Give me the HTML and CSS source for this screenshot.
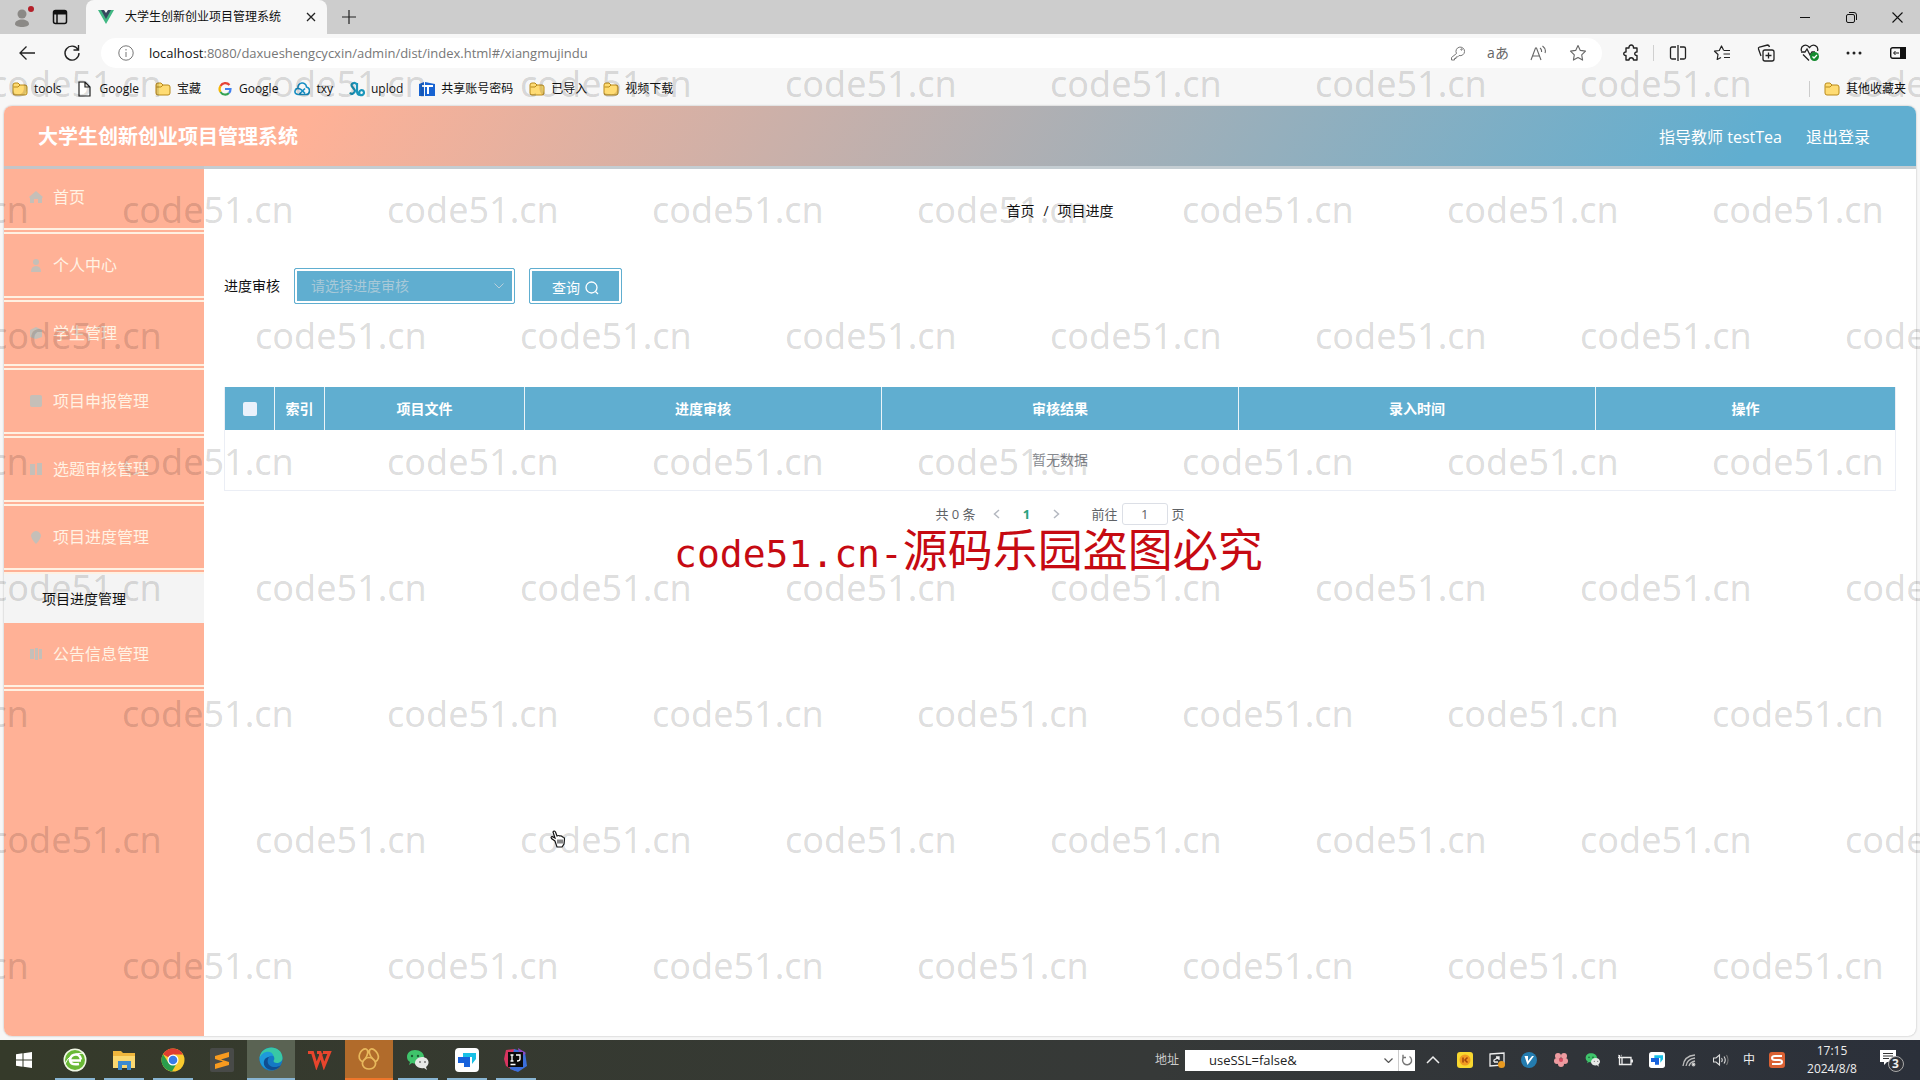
FILE: index.html
```html
<!DOCTYPE html>
<html lang="zh-CN">
<head>
<meta charset="utf-8">
<title>大学生创新创业项目管理系统</title>
<link rel="stylesheet" href="styles.css">
</head>
<body>
<svg class="defs" aria-hidden="true">
  <symbol id="folder" viewBox="0 0 16 16"><path d="M1 4q0-2 2-2h3l2 2h5q2 0 2 2v6q0 2-2 2H3q-2 0-2-2z" fill="#ffdc74" stroke="#b98a1b"/><path d="M1.500 6h4.500l2-2" fill="none" stroke="#b98a1b"/></symbol>
  <symbol id="wechat" viewBox="0 0 24 24"><path d="M9 2C4 2 1 5 1 9c0 2 1 4 3 5l-1 3 3-2c6 2 12-1 12-6 0-4-4-7-9-7z" fill="#3fc46b"/><circle cx="6" cy="8" r="1.200" fill="#1c5e35"/><circle cx="12" cy="8" r="1.200" fill="#1c5e35"/><path d="M16 9c-4 0-7 3-7 6s4 6 9 5l3 2-1-3c5-4 2-10-4-10z" fill="#e6e8e6"/><circle cx="14" cy="14" r="1" fill="#777"/><circle cx="19" cy="14" r="1" fill="#777"/></symbol>
  <symbol id="todesk" viewBox="0 0 24 24"><rect width="24" height="24" rx="4" fill="#fff"/><path d="M8 5h13v6l-4 5V9H8z" fill="#18c0e6"/><path d="M3 9h12v10H9v-4H3z" fill="#1762dc"/></symbol>
</svg>

<header class="browser">
  <div class="tabs">
    <button class="tool profile" aria-label="用户"><svg width="22" height="24" viewBox="0 0 22 24"><circle cx="9" cy="9" r="4.500" fill="#8b8986"/><path d="M2 19c0-6 14-6 14 0 0 4-14 4-14 0z" fill="#8b8986"/><circle cx="18" cy="4" r="3" fill="#b4202a"/></svg></button>
    <button class="tool spaces" aria-label="标签页"><svg width="16" height="16" viewBox="0 0 16 16" fill="none" stroke="#111" stroke-width="1.500"><rect x="1.500" y="1.500" width="13" height="13" rx="2"/><path d="M2 3.500h12" stroke-width="4"/><path d="M5 4v10"/></svg></button>
    <div class="tab">
      <svg width="16" height="14" viewBox="0 0 16 14"><path d="M0 0h4l4 7 4-7h4L8 14z" fill="#41b883"/><path d="M3 0h3l2 3 2-3h3L8 9z" fill="#35495e"/></svg>
      <span class="tab-title">大学生创新创业项目管理系统</span>
      <button class="plain" aria-label="关闭标签"><svg width="10" height="10" viewBox="0 0 10 10" stroke="#222" stroke-width="1.300"><path d="M1 1l8 8M9 1L1 9"/></svg></button>
    </div>
    <button class="plain" aria-label="新标签"><svg width="16" height="16" viewBox="0 0 16 16" stroke="#222" stroke-width="1.200"><path d="M8 1v14M1 8h14"/></svg></button>
    <div class="window-buttons">
      <button class="plain" aria-label="最小化"><svg width="10" height="10" viewBox="0 0 10 10" stroke="#111"><path d="M0 5.500h10"/></svg></button>
      <button class="plain" aria-label="还原"><svg width="11" height="11" viewBox="0 0 11 11" fill="none" stroke="#111"><rect x=".5" y="2.500" width="8" height="8" rx="1.500"/><path d="M3 .5h5q2.500 0 2.500 2.500v5"/></svg></button>
      <button class="plain" aria-label="关闭"><svg width="11" height="11" viewBox="0 0 11 11" stroke="#111" stroke-width="1.100"><path d="M.5.5l10 10M10.500.5l-10 10"/></svg></button>
    </div>
  </div>

  <div class="navbar">
    <button class="plain" aria-label="后退"><svg width="18" height="16" viewBox="0 0 18 16" fill="none" stroke="#222" stroke-width="1.300"><path d="M17 8H2M8.500 1.500L2 8l6.500 6.500"/></svg></button>
    <button class="plain" aria-label="刷新"><svg width="18" height="18" viewBox="0 0 18 18" fill="none" stroke="#222" stroke-width="1.400"><path d="M15 5.500A7 7 0 1 0 16 9M15.500 1v5h-5"/></svg></button>
    <div class="address">
      <svg width="16" height="16" viewBox="0 0 16 16" fill="none" stroke="#777"><circle cx="8" cy="8" r="7.200"/><path d="M8 7v5M8 4v1.500"/></svg>
      <span class="url"><b>localhost</b>:8080/daxueshengcycxin/admin/dist/index.html#/xiangmujindu</span>
      <div class="address-tools">
        <button class="plain" aria-label="密码"><svg width="16" height="16" viewBox="0 0 16 16" fill="none" stroke="#777"><path d="M6.500 8.500A4.300 4.300 0 1 1 9 10.500L7.500 12H6v1.500H4.500V15H1.500v-2.500z"/><circle cx="11.500" cy="4.500" r=".7"/></svg></button>
        <button class="plain translate" aria-label="翻译">aあ</button>
        <button class="plain" aria-label="朗读"><svg width="17" height="16" viewBox="0 0 17 16" fill="none" stroke="#666" stroke-width="1.100"><path d="M1 15L5.500 3h1L11 15M3 11h6.500M10 3q2 1.500 1.500 4M12.500 1q4 3 2.500 7"/></svg></button>
        <button class="plain" aria-label="收藏"><svg width="18" height="18" viewBox="0 0 18 18" fill="none" stroke="#666" stroke-width="1.100" stroke-linejoin="round"><path d="M9 1.500l2.300 4.900 5.200.7-3.800 3.700.9 5.300L9 13.500l-4.600 2.600.9-5.300L1.500 7.100l5.200-.7z"/></svg></button>
      </div>
    </div>
    <div class="nav-tools">
      <button class="plain puzzle" aria-label="扩展"><svg width="17" height="18" viewBox="0 0 17 18" fill="none" stroke="#222" stroke-width="1.400" stroke-linejoin="round"><path d="M3 4h3c-.5-4 5-4 4.500 0H14v4c-3-.5-3 4 0 3.500V16h-3.500c0-3-4.500-3-4.500 0H3v-4.500c-3 .5-3-4 0-3.500z"/></svg></button>
      <button class="plain" aria-label="分屏"><svg width="18" height="18" viewBox="0 0 18 18" fill="none" stroke="#222" stroke-width="1.300"><path d="M7 3H3q-1.500 0-1.500 1.500v9Q1.500 15 3 15h4M11 3h4q1.500 0 1.500 1.500v9Q16.500 15 15 15h-4M9 1v16"/></svg></button>
      <button class="plain" aria-label="收藏夹"><svg width="18" height="18" viewBox="0 0 18 18" fill="none" stroke="#222" stroke-width="1.200" stroke-linejoin="round"><path d="M10.500 6L8.500 2 6.300 6.500 1.500 7.200 5 10.500l-.8 5L8 13.500M10.500 6.500H17M10.500 10H17M11 13.500h6"/></svg></button>
      <button class="plain" aria-label="集锦"><svg width="18" height="18" viewBox="0 0 18 18" fill="none" stroke="#222" stroke-width="1.300"><rect x="6" y="6" width="11" height="11" rx="2"/><path d="M11.500 8.500v6M8.500 11.500h6M4 12L1.500 5q-.5-1.500 1-2l8-2q1.500 0 2 2"/></svg></button>
      <button class="plain" aria-label="性能"><svg width="20" height="18" viewBox="0 0 20 18" fill="none" stroke="#222" stroke-width="1.300"><path d="M1.500 7C0 2 6-1 9.500 3.500 13-1 19 2 17.500 7M1 8h4l2-3 3 6 2-3h3M3 10.500l6 6"/><circle cx="14.500" cy="12.500" r="4.500" fill="#138a2e" stroke="none"/><path d="M12.500 12.500l1.500 1.500 3-3" stroke="#fff"/></svg></button>
      <button class="plain" aria-label="更多"><svg width="16" height="4" viewBox="0 0 16 4" fill="#222"><circle cx="2" cy="2" r="1.500"/><circle cx="8" cy="2" r="1.500"/><circle cx="14" cy="2" r="1.500"/></svg></button>
      <button class="plain" aria-label="侧栏"><svg width="16" height="12" viewBox="0 0 16 12"><rect x=".7" y=".7" width="14.600" height="10.600" rx="2" fill="none" stroke="#111" stroke-width="1.400"/><path d="M10 0h6v12h-6z" fill="#111"/><path d="M9 6H4M5.500 4L3.500 6l2 2" fill="none" stroke="#111"/></svg></button>
    </div>
  </div>

  <nav class="bookmarks">
    <a href="#"><svg width="16" height="16"><use href="#folder"/></svg>tools</a>
    <a href="#"><svg width="16" height="16" viewBox="0 0 16 16" fill="#fff" stroke="#222" stroke-width="1.200"><path d="M2 1h6l5 5v9H2zM8 1v5h5"/></svg>Google</a>
    <a href="#"><svg width="16" height="16"><use href="#folder"/></svg>宝藏</a>
    <a href="#"><svg width="16" height="16" viewBox="0 0 16 16" fill="none" stroke-width="2.200"><path d="M12.500 4A5.500 5.500 0 0 0 3.500 5" stroke="#e54335"/><path d="M3.500 5a5.500 5.500 0 0 0 0 6" stroke="#f6b704"/><path d="M3.500 11a5.500 5.500 0 0 0 8.500 1" stroke="#34a353"/><path d="M8 8h5.500q0 2.500-1.500 4" stroke="#4280ef"/></svg>Google</a>
    <a href="#"><svg width="16" height="16" viewBox="0 0 16 16" fill="none" stroke="#168ec4" stroke-width="1.600"><path d="M4 13.500C-1 13 1 7 4 7.500 3 1 12 0 12.500 6 17 7 16 13.500 12 13.500H5l6-6M4 7.500q3 0 7 5"/></svg>txy</a>
    <a href="#"><svg width="16" height="16" viewBox="0 0 16 16" fill="none" stroke="#1b96ba" stroke-width="2.200"><path d="M8 4C6 0 1 3 3 5.500S8 10 4 12.500q-2 1-3-1M8 2v8q0 4 3 4M11 14c-3-5 4-7 4-2q-1 3-4 2"/></svg>uplod</a>
    <a href="#"><svg width="16" height="16" viewBox="0 0 16 16"><path d="M0 3l5-2v14H0zM6 1l10 2v12H6z" fill="#1763d2"/><path d="M3 5h11M9 5v8" stroke="#fff" stroke-width="2"/></svg>共享账号密码</a>
    <a href="#"><svg width="16" height="16"><use href="#folder"/></svg>已导入</a>
    <a href="#"><svg width="16" height="16"><use href="#folder"/></svg>视频下载</a>
    <a href="#" class="other"><svg width="16" height="16"><use href="#folder"/></svg>其他收藏夹</a>
  </nav>
</header>

<div class="page">
  <div class="app">
    <header class="app-header">
      <h1>大学生创新创业项目管理系统</h1>
      <span>指导教师 testTea</span>
      <a href="#">退出登录</a>
    </header>
    <div class="app-body">
      <nav class="sidebar">
        <a href="#" class="item"><svg width="14" height="14" viewBox="0 0 14 14"><path d="M7 1l7 6-1 1v5H9V9H5v4H1V8L0 7z"/></svg>首页</a>
        <a href="#" class="item"><svg width="14" height="14" viewBox="0 0 14 14"><circle cx="7" cy="4" r="3"/><path d="M2 14q0-6 5-6t5 6z"/></svg>个人中心</a>
        <a href="#" class="item"><svg width="14" height="14" viewBox="0 0 14 14"><path d="M1 4l6-3 6 3v7l-6 2-6-2z"/></svg>学生管理</a>
        <a href="#" class="item"><svg width="14" height="14" viewBox="0 0 14 14"><rect x="1" y="1" width="12" height="12" rx="2"/></svg>项目申报管理</a>
        <a href="#" class="item"><svg width="14" height="14" viewBox="0 0 14 14"><path d="M1 2h5v11H1zM8 1h5v12H8z"/></svg>选题审核管理</a>
        <a href="#" class="item"><svg width="14" height="14" viewBox="0 0 14 14"><path d="M7 1q3 0 5 4 0 4-5 9-5-5-5-9 2-4 5-4z"/></svg>项目进度管理</a>
        <a href="#" class="subitem">项目进度管理</a>
        <a href="#" class="item"><svg width="14" height="14" viewBox="0 0 14 14"><path d="M1 2h4v10H1zM6 1h3v12H6zM10 2h3v10h-3z"/></svg>公告信息管理</a>
      </nav>

      <main class="content">
        <div class="breadcrumb"><a href="#">首页</a><span>/</span><span>项目进度</span></div>
        <form class="filters">
          <label for="state">进度审核</label>
          <div class="select-box">
            <select id="state"><option>请选择进度审核</option></select>
            <svg class="caret" width="10" height="6" viewBox="0 0 10 6" fill="none" stroke="#b9cfdb"><path d="M.5.5L5 5 9.500.5"/></svg>
          </div>
          <button type="button" class="query">查询<svg width="14" height="14" viewBox="0 0 14 14" fill="none" stroke="#fff" stroke-width="1.300"><circle cx="6.500" cy="6.500" r="5.500"/><path d="M10.500 10.500L13 13"/></svg></button>
        </form>

        <table>
          <colgroup><col class="narrow"><col class="narrow"><col class="file"><col><col><col><col class="ops"></colgroup>
          <thead><tr><th><input type="checkbox" aria-label="全选"></th><th>索引</th><th>项目文件</th><th>进度审核</th><th>审核结果</th><th>录入时间</th><th>操作</th></tr></thead>
          <tbody><tr><td colspan="7">暂无数据</td></tr></tbody>
        </table>

        <div class="pagination">
          <span>共 0 条</span>
          <button class="plain" aria-label="上一页"><svg width="7" height="10" viewBox="0 0 7 10" fill="none" stroke="#b4b8c0" stroke-width="1.500"><path d="M6 1L1.500 5 6 9"/></svg></button>
          <button class="plain current">1</button>
          <button class="plain" aria-label="下一页"><svg width="7" height="10" viewBox="0 0 7 10" fill="none" stroke="#b4b8c0" stroke-width="1.500"><path d="M1 1l4.500 4L1 9"/></svg></button>
          <label class="jump">前往<input type="text" value="1">页</label>
        </div>
      </main>
    </div>
  </div>
</div>

<footer class="taskbar">
  <button class="start" aria-label="开始"><svg width="16" height="16" viewBox="0 0 16 16" fill="#fff"><path d="M0 2.200l6.500-.9v6.200H0zM7.500 1.200L16 0v7.500H7.500zM0 8.500h6.500v6.200L0 13.800zM7.500 8.500H16V16l-8.500-1.200z"/></svg></button>
  <div class="apps">
    <button class="running" aria-label="浏览器"><svg width="24" height="24" viewBox="0 0 24 24"><circle cx="12" cy="12" r="11.500" fill="#f1f8e6"/><circle cx="12" cy="12" r="10" fill="#69b936"/><path d="M18 12.500H7q1 5 9 3.500M7 11.500q1-5 6-5 4 0 5 5" fill="none" stroke="#fff" stroke-width="2.500"/><path d="M2 16Q6 5 21 5" stroke="#fff" fill="none"/></svg></button>
    <button class="running" aria-label="文件"><svg width="22" height="20" viewBox="0 0 22 20"><path d="M0 1h8l2 2h12v14H0z" fill="#efb63d"/><path d="M0 6h22v12H0z" fill="#fbd870"/><path d="M5 11h13v9h-4v-5H9v5H5z" fill="#3c8bd0"/></svg></button>
    <button class="running" aria-label="Chrome"><svg width="24" height="24" viewBox="0 0 24 24"><circle cx="12" cy="12" r="11.500" fill="#f8ca2e"/><path d="M12 12L2 6.300A11.500 11.500 0 0 1 22 6.500H12z" fill="#df3d31"/><path d="M2 6.300a11.500 11.500 0 0 0 9 17.200L16.500 14 12 17l-5-3z" fill="#2a9d4c"/><circle cx="12" cy="12" r="5.500" fill="#fff"/><circle cx="12" cy="12" r="4.300" fill="#3a7ce8"/></svg></button>
    <button aria-label="Sublime"><svg width="24" height="24" viewBox="0 0 24 24"><rect width="24" height="24" rx="2" fill="#484a48"/><path d="M19 4v5l-8 2.500 8 2.500v3L5 21v-5l8-2.500L5 11V8z" fill="#f79a1f"/></svg></button>
    <button class="active" aria-label="Edge"><svg width="26" height="24" viewBox="0 0 26 24"><circle cx="13" cy="12" r="11.500" fill="#1479c4"/><path d="M1.500 11C3-3 24-3 24.500 11c0 6-9 6-9 3 4-6-7-11-14-3z" fill="#38c8a5"/><path d="M1.500 11c3-8 13-8 14-2-7-2-9 7-4 13-6 0-10-5-10-11z" fill="#1e9adb"/><path d="M11 10c-5 8 5 13 12 8-5 8-19 6-17-4 1-3 3-4 5-4z" fill="#104d91"/></svg></button>
    <button aria-label="WPS"><svg width="26" height="20" viewBox="0 0 26 20" fill="none" stroke="#e8452d" stroke-width="3"><path d="M1 2.500h4.500l4 13.500 5-13M10 2.500h3l4 13.500 5.500-13.500H16"/></svg></button>
    <button class="alert" aria-label="编辑器"><svg width="24" height="24" viewBox="0 0 24 24" fill="none" stroke="#e8b85c" stroke-width="1.700"><path d="M8 12c-5 4-2 10 4 10s9-6 4-10c-2-2-6-2-8 0z"/><path d="M6 15C-2 12 4 1 9 2c3 1 2 6-1 10M18 15c8-4 0-14-4-13-3 1-2 6 2 10"/></svg></button>
    <button class="running" aria-label="微信"><svg width="24" height="24"><use href="#wechat"/></svg></button>
    <button class="running" aria-label="ToDesk"><svg width="24" height="24"><use href="#todesk"/></svg></button>
    <button class="running" aria-label="IDEA"><svg width="24" height="24" viewBox="0 0 24 24"><path d="M2 2l9-1v22l-9-5-2-7z" fill="#d8345f"/><path d="M10 1l11 3 2 14-9 6-8-3z" fill="#3b6fdb"/><path d="M14 0l8 5-6 5z" fill="#8e4ac2"/><rect x="4" y="4" width="15" height="15" fill="#0b0b0b"/><path d="M6.500 7h3M8 7v6M6.500 13h3M12 7h4v4q0 2-3 2M6.500 16.500h5" stroke="#fff" fill="none" stroke-width="1.300"/></svg></button>
  </div>
  <div class="tray">
    <label for="addr">地址</label>
    <div class="addr"><input id="addr" type="text" value="useSSL=false&amp;"><svg class="drop" width="9" height="5" viewBox="0 0 9 5" fill="none" stroke="#555" stroke-width="1.200"><path d="M.5.5l4 4 4-4"/></svg><button class="plain" aria-label="转到"><svg width="12" height="12" viewBox="0 0 12 12" fill="none" stroke="#777" stroke-width="1.400"><path d="M8.500 2.500A4.500 4.500 0 1 1 3 3M2 .8v2.700h3"/></svg></button></div>
    <div class="tray-icons">
      <svg width="16" height="16" viewBox="0 0 16 16" fill="none" stroke="#eee" stroke-width="1.500"><path d="M2 11l6-6 6 6"/></svg>
      <svg width="16" height="16" viewBox="0 0 16 16"><rect width="16" height="16" rx="3" fill="#f8d72f"/><circle cx="8" cy="8" r="5.500" fill="#f19a20"/><path d="M6 5.500v5M10.500 5.500L8 8l2.500 2.500" stroke="#a3430c" stroke-width="1.500" fill="none"/></svg>
      <svg width="16" height="16" viewBox="0 0 16 16"><path d="M1 2l14-1v12L1 14zM5 10V8l5-3M7 5h3v3M5 10h4" fill="none" stroke="#eee" stroke-width="1.300"/><circle cx="12.500" cy="12.500" r="3.500" fill="#e99a20"/></svg>
      <svg width="16" height="16" viewBox="0 0 16 16"><circle cx="8" cy="8" r="8" fill="#247caf"/><path d="M3.500 4h3.500v5l4-5h2L6.500 13z" fill="#fff"/></svg>
      <svg width="16" height="16" viewBox="0 0 16 16" fill="#ee9ba0"><circle cx="5" cy="4" r="3"/><circle cx="11" cy="4" r="3"/><circle cx="4" cy="9" r="3"/><circle cx="12" cy="9" r="3"/><circle cx="8" cy="12" r="3"/><circle cx="8" cy="8" r="2" fill="#d94b61"/></svg>
      <svg width="16" height="16"><use href="#wechat"/></svg>
      <svg width="16" height="16" viewBox="0 0 16 16" fill="none" stroke="#eee" stroke-width="1.300"><path d="M5 5.500h9v7H5zM15.300 7.500v3M2.500 3v9.500H5M1 5.500h3.500M1 3.500h.5M4 3.500h.5"/></svg>
      <svg width="16" height="16"><use href="#todesk"/></svg>
      <svg width="16" height="16" viewBox="0 0 16 16" fill="none" stroke="#bbb" stroke-width="1.300"><path d="M2 14Q3 4 14 3M5 14q1-7 9-8M8 14q1-4 6-5"/><circle cx="12.500" cy="12.500" r="1.300" fill="#eee"/></svg>
      <svg width="16" height="16" viewBox="0 0 16 16" fill="none" stroke="#ddd" stroke-width="1.100"><path d="M.5 6h2.500l3.500-3v10L3 10H.5zM8.500 6q1.500 2 0 4M11 4.500q2.500 3.500 0 7"/><path d="M13.500 3q3 5 0 10" stroke="#777"/></svg>
      <span class="ime">中</span>
      <svg width="16" height="16" viewBox="0 0 16 16"><rect width="16" height="16" rx="3" fill="#db6133"/><path d="M13 4H6Q3 4 3 6t3 2h4q3 0 3 2t-3 2H3" fill="none" stroke="#fff" stroke-width="2"/></svg>
    </div>
    <div class="clock"><time>17:15</time><time>2024/8/8</time></div>
    <button class="plain notice" aria-label="通知"><svg width="26" height="26" viewBox="0 0 26 26"><path d="M1 3h16v12H8l-3 3v-3H1z" fill="#fff"/><path d="M4 6.500h10M4 9h10M4 11.500h6" stroke="#333"/><circle cx="17" cy="17" r="7.500" fill="#303238" stroke="#aaa"/></svg><span>3</span></button>
  </div>
</footer>

<div class="watermarks" aria-hidden="true">
  <div class="mark-row"><span>code51.cn</span><span>code51.cn</span><span>code51.cn</span><span>code51.cn</span><span>code51.cn</span><span>code51.cn</span><span>code51.cn</span><span>code51.cn</span></div>
  <div class="mark-row"><span>code51.cn</span><span>code51.cn</span><span>code51.cn</span><span>code51.cn</span><span>code51.cn</span><span>code51.cn</span><span>code51.cn</span><span>code51.cn</span></div>
  <div class="mark-row"><span>code51.cn</span><span>code51.cn</span><span>code51.cn</span><span>code51.cn</span><span>code51.cn</span><span>code51.cn</span><span>code51.cn</span><span>code51.cn</span></div>
  <div class="mark-row"><span>code51.cn</span><span>code51.cn</span><span>code51.cn</span><span>code51.cn</span><span>code51.cn</span><span>code51.cn</span><span>code51.cn</span><span>code51.cn</span></div>
  <div class="mark-row"><span>code51.cn</span><span>code51.cn</span><span>code51.cn</span><span>code51.cn</span><span>code51.cn</span><span>code51.cn</span><span>code51.cn</span><span>code51.cn</span></div>
  <div class="mark-row"><span>code51.cn</span><span>code51.cn</span><span>code51.cn</span><span>code51.cn</span><span>code51.cn</span><span>code51.cn</span><span>code51.cn</span><span>code51.cn</span></div>
  <div class="mark-row"><span>code51.cn</span><span>code51.cn</span><span>code51.cn</span><span>code51.cn</span><span>code51.cn</span><span>code51.cn</span><span>code51.cn</span><span>code51.cn</span></div>
  <div class="mark-row"><span>code51.cn</span><span>code51.cn</span><span>code51.cn</span><span>code51.cn</span><span>code51.cn</span><span>code51.cn</span><span>code51.cn</span><span>code51.cn</span></div>
</div>
<div class="notice-mark"><span class="latin">code51.cn-</span>源码乐园盗图必究</div>
<svg class="cursor" width="16" height="18" viewBox="0 0 16 18" fill="#fff" stroke="#111" stroke-width="1.200"><path d="M5 11L1.500 8.500q-1-1.500.5-2L5 8 3 2q1-2 2.500 0L7 6q2-1 3 0 2-.5 2.500 1 2 0 2 2l-.5 5-2 3H7z"/><path d="M8 9.500v4M10 9.500v4M12 9.500v4" stroke-width="1"/></svg>
</body>
</html>
```
FILE: styles.css
```css
* { box-sizing: border-box; }
body {
  margin: 0;
  min-height: 100vh;
  display: flex;
  flex-direction: column;
  position: relative;
  overflow: hidden;
  background: #f7f7f7;
  color: #111;
  font: 12px/16px "Open Sans", "Noto Sans CJK SC", sans-serif;
}
a { color: inherit; text-decoration: none; }
svg { display: block; flex: none; }
button, input, select { font: inherit; color: inherit; }
button { border: 0; background: none; padding: 0; }
.plain, .tool { display: flex; align-items: center; justify-content: center; }
.defs { position: absolute; width: 0; height: 0; }

/* browser chrome */
.tabs { display: flex; align-items: center; height: 34px; background: #cdcdcd; }
.profile { width: 28px; margin-left: 10px; }
.spaces { width: 48px; padding-right: 4px; }
.tab {
  display: flex;
  align-items: center;
  gap: 11px;
  align-self: stretch;
  width: 241px;
  padding: 0 11px 0 12px;
  margin-right: 14px;
  border-radius: 8px 8px 0 0;
  background: #f7f7f7;
}
.tab-title { flex: 1; }
.window-buttons { display: flex; margin-left: auto; }
.window-buttons .plain { width: 46px; height: 34px; }
.navbar { display: flex; align-items: center; height: 38px; padding-left: 18px; }
.navbar > .plain { width: 18px; margin-right: 27px; }
.navbar > .plain + .plain { margin-right: 20px; }
.address {
  flex: 1;
  display: flex;
  align-items: center;
  height: 30px;
  padding: 0 4px 0 17px;
  border-radius: 15px;
  background: #fff;
  font-size: 13px;
}
.url { flex: 1; margin-left: 15px; color: #777; }
.url b { font-weight: 400; color: #111; }
.address-tools { display: flex; }
.address-tools .plain { width: 40px; }
.translate { color: #666; font-size: 14px; }
.nav-tools { display: flex; align-items: center; }
.nav-tools .plain { width: 44px; }
.nav-tools .puzzle { width: 52px; height: 16px; padding-left: 8px; margin-right: 2px; border-right: 1px solid #d0d0d0; }
.bookmarks { display: flex; align-items: center; gap: 16px; height: 34px; padding: 0 14px 0 12px; }
.bookmarks a { display: flex; align-items: center; gap: 6px; }
.bookmarks .other { margin-left: auto; padding-left: 14px; border-left: 1px solid #ccc; }

/* application */
.page { flex: 1; display: flex; padding: 0 4px 4px; }
.app {
  flex: 1;
  display: flex;
  flex-direction: column;
  overflow: hidden;
  border-radius: 8px;
  background: #fff;
  box-shadow: 0 0 2px rgba(0, 0, 0, .3);
}
.app-header {
  display: flex;
  align-items: center;
  gap: 24px;
  height: 60px;
  padding: 2px 46px 0 34px;
  position: relative;
  color: #fff;
  font-size: 16px;
  background: linear-gradient(120deg, #ffb196 16%, #60aed0 91%);
  box-shadow: 0 3px 0 rgba(190, 200, 205, .9);
}
h1 { flex: 1; margin: 0; font-size: 20px; line-height: 28px; font-weight: 700; }
.app-body { flex: 1; display: flex; }
.sidebar { width: 200px; background: #ffb196; }
.item {
  display: flex;
  align-items: center;
  gap: 10px;
  height: 68px;
  padding-left: 25px;
  border-bottom: 6px double #fff1e2;
  color: #fff3e4;
  font-size: 16px;
}
.item svg { fill: #c5bfb8; }
.subitem { display: flex; align-items: center; height: 49px; padding-left: 38px; background: #f4f4f4; font-size: 14px; }
.content { flex: 1; padding: 35px 20px 20px; font-size: 14px; line-height: 20px; }
.breadcrumb { display: flex; justify-content: center; gap: 9px; }
.filters { display: flex; align-items: center; margin: 47px 0 83px; }
.select-box { position: relative; width: 221px; margin: 0 14px; }
.select-box select, .query {
  height: 36px;
  border: 1px solid #60aed0;
  border-radius: 2px;
  padding: 0 16px;
  background: #60aed0;
  box-shadow: inset 0 0 0 2px #fff;
}
.select-box select { width: 100%; appearance: none; color: #a8c9d8; }
.caret { position: absolute; right: 11px; top: 15px; }
.query { display: flex; align-items: center; justify-content: center; gap: 5px; width: 93px; padding-top: 3px; color: #fff; }
table { width: 100%; table-layout: fixed; border-collapse: separate; border-spacing: 0; border: 1px solid #ebeef5; border-top: 0; }
.narrow { width: 50px; }
.file { width: 200px; }
.ops { width: 299px; }
th { height: 43px; padding: 0; background: #60aed0; color: #fff; border-right: 1px solid #ebf4f8; }
th:last-child { border-right: 0; }
th input { appearance: none; display: block; width: 14px; height: 14px; margin: 0 auto; border-radius: 2px; background: #eaf1fb; }
td { height: 60px; padding: 0; text-align: center; color: #86898f; }
.pagination { display: flex; align-items: center; justify-content: center; margin-top: 12px; height: 22px; color: #606266; font-size: 13px; }
.pagination > .plain { width: 30px; height: 22px; }
.pagination > span { margin-right: 6px; }
.pagination .current { color: #29a27e; font-weight: 700; }
.jump { display: flex; align-items: center; gap: 4px; margin-left: 20px; }
.jump input { width: 46px; height: 22px; border: 1px solid #dcdfe6; border-radius: 3px; text-align: center; }

/* taskbar */
.taskbar { display: flex; height: 40px; background: linear-gradient(90deg, #353a2a, #363938 60%, #2b303a); color: #eee; }
.start { display: flex; align-items: center; justify-content: center; width: 48px; margin-right: 3px; }
.apps { display: flex; gap: 1px; }
.apps button { display: flex; align-items: center; justify-content: center; width: 48px; }
.running { background: linear-gradient(#88b5d3, #88b5d3) bottom / 40px 2px no-repeat; }
.active { background: #5a6353; border-bottom: 2px solid #88b5d3; }
.alert { background: #b16b2b; border-bottom: 2px solid #ee762b; }
.tray { display: flex; align-items: center; margin-left: auto; }
.tray label { margin-right: 6px; color: #ccc; }
.addr { display: flex; align-items: center; width: 230px; height: 21px; background: #fff; color: #222; }
.addr input { flex: 1; min-width: 0; border: 0; background: none; padding: 0 0 0 24px; font-size: 13px; }
.addr .plain { width: 17px; height: 21px; margin-left: 5px; border-left: 1px solid #ccc; }
.tray-icons { display: flex; align-items: center; gap: 16px; margin-left: 10px; }
.ime { width: 12px; margin: 0 -2px; }
.clock { display: flex; flex-direction: column; align-items: center; width: 60px; margin-left: 17px; line-height: 18px; }
.notice { position: relative; margin: 0 15px 0 17px; }
.notice span { position: absolute; left: 13px; top: 9px; font-weight: 700; }

/* overlays */
.watermarks { position: absolute; left: 0; top: 21px; width: 100%; overflow: hidden; pointer-events: none; color: rgba(0, 0, 0, .15); font: 36px/126px "Noto Sans", sans-serif; }
.mark-row { display: flex; height: 126px; margin-left: -10px; }
.mark-row:nth-child(even) { margin-left: -143px; }
.mark-row span { flex: none; width: 265px; }
.notice-mark { position: absolute; left: 674px; top: 518px; color: #c60a12; font: 45px/60px "Noto Sans CJK SC", sans-serif; white-space: nowrap; }
.latin { font-family: "DejaVu Sans Mono", monospace; font-size: 38px; }
.cursor { position: absolute; left: 550px; top: 830px; }
```
